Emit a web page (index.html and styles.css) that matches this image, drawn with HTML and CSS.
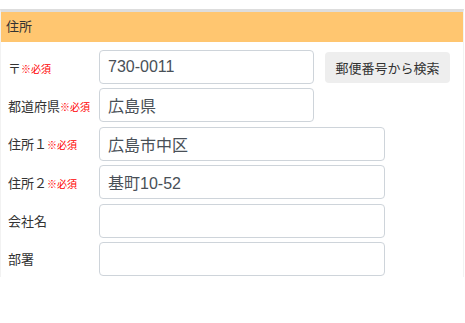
FILE: index.html
```html
<!DOCTYPE html>
<html>
<head>
  <title>住所</title>
  <link rel="stylesheet" href="styles.css">
</head>
<body>
  <div class="panel">
    <div class="panel-header">住所</div>
    <form class="panel-body">
      <div class="form-row">
        <label class="form-label">〒<span class="required">※必須</span></label>
        <input class="form-input short" type="text" value="730-0011">
        <button type="button" class="search-btn">郵便番号から検索</button>
      </div>
      <div class="form-row">
        <label class="form-label">都道府県<span class="required">※必須</span></label>
        <input class="form-input short" type="text" value="広島県">
      </div>
      <div class="form-row">
        <label class="form-label">住所１<span class="required">※必須</span></label>
        <input class="form-input" type="text" value="広島市中区">
      </div>
      <div class="form-row">
        <label class="form-label">住所２<span class="required">※必須</span></label>
        <input class="form-input" type="text" value="基町10-52">
      </div>
      <div class="form-row">
        <label class="form-label">会社名</label>
        <input class="form-input" type="text" value="">
      </div>
      <div class="form-row">
        <label class="form-label">部署</label>
        <input class="form-input" type="text" value="">
      </div>
    </form>
  </div>
</body>
</html>
```

FILE: styles.css
```css
body {
  margin: 0;
  padding-top: 9px;
  font-family: "Liberation Sans", "Noto Sans CJK JP", sans-serif;
  color: #333;
  background-color: white;
}

.panel {
  width: 462px;
  border: 1px solid #f2f2f2;
  border-top: 3px solid #ddd;
  border-bottom: none;
}

.panel-header {
  height: 30px;
  line-height: 30px;
  padding-left: 5px;
  font-size: 13px;
  background-color: #ffc670;
}

.panel-body {
  display: flex;
  flex-direction: column;
  gap: 4.4px;
  margin: 0;
  padding: 8px 0 1px 0;
}

.form-row {
  display: flex;
  align-items: center;
}

.form-label {
  width: 91px;
  padding-left: 7px;
  font-size: 13px;
  white-space: nowrap;
}

.required {
  color: #f00;
  font-size: 10px;
}

.form-input {
  box-sizing: border-box;
  width: 286px;
  height: 34px;
  padding: 0 8px;
  border: 1px solid #ced4da;
  border-radius: 4px;
  font-family: "Liberation Sans", "Noto Sans CJK JP", sans-serif;
  font-size: 16px;
  color: #495057;
  background-color: white;
}

.form-input.short {
  width: 215px;
}

.search-btn {
  margin-left: 11px;
  width: 125px;
  height: 31px;
  border: none;
  border-radius: 4px;
  background-color: #eee;
  color: #333;
  font-family: "Liberation Sans", "Noto Sans CJK JP", sans-serif;
  font-size: 13px;
  padding: 0;
}
```
